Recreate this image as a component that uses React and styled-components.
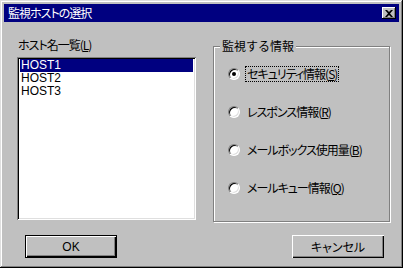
import React from "react";
import styled, { createGlobalStyle } from "styled-components";

const Global = createGlobalStyle`
  html, body {
    margin: 0;
    padding: 0;
    background: #fff;
  }
  body {
    font-family: "Noto Sans CJK JP", "Liberation Sans", sans-serif;
    font-size: 12px;
    font-feature-settings: "palt";
  }
`;

const Window = styled.div`
  width: 403px;
  height: 268px;
  box-sizing: border-box;
  background: #c0c0c0;
  padding: 4px;
  box-shadow: inset -1px -1px #000, inset 1px 1px #dfdfdf,
    inset -2px -2px #808080, inset 2px 2px #fff;
  display: flex;
  flex-direction: column;
`;

const TitleBar = styled.div`
  height: 18px;
  background: #000080;
  color: #fff;
  display: flex;
  align-items: center;
  justify-content: space-between;
  padding: 0 3px 0 4px;
  font-size: 12px;
  line-height: 18px;
  letter-spacing: -1px;
`;

const CloseButton = styled.div`
  width: 14px;
  height: 12px;
  background: #c0c0c0;
  box-shadow: inset -1px -1px #000, inset 1px 1px #fff, inset -2px -2px #808080;
  display: flex;
  align-items: center;
  justify-content: center;
`;

const Main = styled.div`
  display: flex;
  padding: 14px 0 0 13px;
`;

const LeftCol = styled.div`
  width: 179px;
  display: flex;
  flex-direction: column;
`;

const Label = styled.div`
  color: #000;
  height: 18px;
  line-height: 18px;
  padding-left: 1px;
  margin-bottom: 3px;
  letter-spacing: -1px;
`;

const ListBox = styled.div`
  height: 163px;
  background: #fff;
  box-sizing: border-box;
  padding: 2px 3px;
  box-shadow: inset 1px 1px #808080, inset -1px -1px #fff,
    inset 2px 2px #000, inset -2px -2px #dfdfdf;
  font-family: "Liberation Sans", Arial, sans-serif;
`;

const ListItem = styled.div`
  height: 13px;
  line-height: 13px;
  padding-left: 1px;
  font-size: 12px;
  background: ${({ selected }) => (selected ? "#000080" : "transparent")};
  color: ${({ selected }) => (selected ? "#fff" : "#000")};
`;

const GroupBox = styled.div`
  position: relative;
  margin: 10px 0 0 17px;
  width: 177px;
  height: 176px;
  box-sizing: border-box;
  border: 1px solid #808080;
  box-shadow: inset 1px 1px #fff, 1px 1px #fff;
  padding: 21px 0 0 14px;
  display: flex;
  flex-direction: column;
  gap: 26px;
`;

const Legend = styled.div`
  position: absolute;
  top: -9px;
  left: 6px;
  padding: 0 2px;
  background: #c0c0c0;
  line-height: 16px;
  font-feature-settings: normal;
`;

const RadioRow = styled.div`
  display: flex;
  align-items: center;
  height: 12px;
  gap: 6px;
`;

const RadioCircle = styled.div`
  width: 12px;
  height: 12px;
  box-sizing: border-box;
  border-radius: 50%;
  background: #fff;
  border: 1px solid;
  border-color: #808080 #fff #fff #808080;
  box-shadow: inset 1px 1px #000, inset -1px -1px #dfdfdf;
  display: flex;
  align-items: center;
  justify-content: center;

  &::after {
    content: "";
    width: 4px;
    height: 4px;
    border-radius: 50%;
    background: ${({ checked }) => (checked ? "#000" : "transparent")};
  }
`;

const RadioLabel = styled.span`
  line-height: 14px;
  padding: 0 1px;
  letter-spacing: -1px;
  outline: ${({ focused }) => (focused ? "1px dotted #000" : "none")};
`;

const Mnemonic = styled.span`
  text-decoration: underline;
`;

const Buttons = styled.div`
  display: flex;
  justify-content: space-between;
  padding: 13px 0 0 21px;
  width: 380px;
  box-sizing: border-box;
`;

const Button = styled.div`
  width: 92px;
  height: 23px;
  box-sizing: border-box;
  display: flex;
  align-items: center;
  justify-content: center;
  color: #000;
  background: #c0c0c0;
  font-size: 12px;
  box-shadow: ${({ isDefault }) =>
    isDefault
      ? "inset 0 0 0 1px #000, inset 2px 2px #fff, inset -2px -2px #000, inset -3px -3px #808080"
      : "inset 1px 1px #fff, inset -1px -1px #000, inset -2px -2px #808080"};
`;

const OkText = styled.span`
  font-family: "Liberation Sans", Arial, sans-serif;
`;

const hosts = ["HOST1", "HOST2", "HOST3"];

const options = [
  { text: "セキュリティ情報", key: "S", checked: true },
  { text: "レスポンス情報", key: "R" },
  { text: "メールボックス使用量", key: "B" },
  { text: "メールキュー情報", key: "Q" },
];

export default function App() {
  return (
    <>
      <Global />
      <Window>
        <TitleBar>
          <span>監視ホストの選択</span>
          <CloseButton>
            <svg width="8" height="7" viewBox="0 0 8 7">
              <path d="M0 0h2l2 2 2-2h2L5 3.5 8 7H6L4 5 2 7H0l3-3.5z" fill="#000" />
            </svg>
          </CloseButton>
        </TitleBar>
        <Main>
          <LeftCol>
            <Label>
              ホスト名一覧(<Mnemonic>L</Mnemonic>)
            </Label>
            <ListBox>
              {hosts.map((h, i) => (
                <ListItem key={h} selected={i === 0}>
                  {h}
                </ListItem>
              ))}
            </ListBox>
          </LeftCol>
          <GroupBox>
            <Legend>監視する情報</Legend>
            {options.map((o) => (
              <RadioRow key={o.key}>
                <RadioCircle checked={o.checked} />
                <RadioLabel focused={o.checked}>
                  {o.text}(<Mnemonic>{o.key}</Mnemonic>)
                </RadioLabel>
              </RadioRow>
            ))}
          </GroupBox>
        </Main>
        <Buttons>
          <Button isDefault>
            <OkText>OK</OkText>
          </Button>
          <Button>キャンセル</Button>
        </Buttons>
      </Window>
    </>
  );
}
